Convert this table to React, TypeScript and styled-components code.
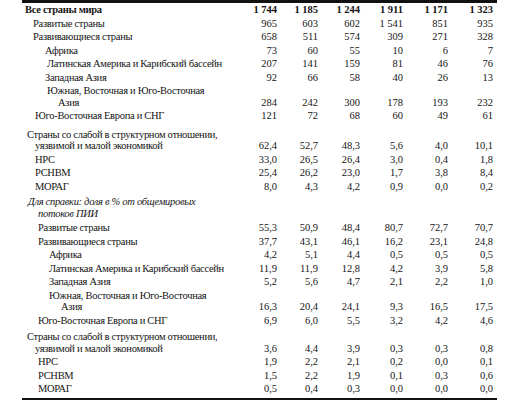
import React from 'react';
import styled, { createGlobalStyle, css } from 'styled-components';

const GlobalStyle = createGlobalStyle`
  html, body {
    margin: 0;
    padding: 0;
    background: #ffffff;
  }
  body {
    font-family: "Liberation Serif", "Times New Roman", serif;
    color: #151515;
  }
`;

const COLUMNS = '210px 45px 41px 42px 43px 45px 49px';

const Page = styled.div`
  width: 521px;
  height: 400px;
  overflow: hidden;
  padding-left: 22px;
  box-sizing: border-box;
`;

const Table = styled.div`
  width: 475px;
  border-top: 3px solid #111;
  border-bottom: 3px solid #111;
  padding-bottom: 2px;
  font-size: 10.5px;
`;

const Row = styled.div<{ gap?: number; bold?: boolean }>`
  display: grid;
  grid-template-columns: ${COLUMNS};
  align-items: end;
  padding-top: ${props => props.gap || 0}px;
  ${props => props.bold && css`
    font-weight: bold;
  `}
`;

const Label = styled.div<{ indent: number; italic?: boolean }>`
  line-height: 11.5px;
  padding: 1px 0;
  padding-left: ${props => props.indent - 22}px;
  letter-spacing: -0.3px;
  white-space: nowrap;
  ${props => props.italic && css`
    font-style: italic;
  `}
`;

const Line = styled.div<{ hang: number }>`
  padding-left: ${props => props.hang}px;
`;

const Value = styled.div`
  line-height: 13.5px;
  text-align: right;
  white-space: nowrap;
  &:last-child {
    padding-right: 4px;
  }
`;

type RowData = {
  label: string | string[];
  indent: number;
  hang?: number;
  gap?: number;
  bold?: boolean;
  italic?: boolean;
  values?: string[];
};

const weak = ['Страны со слабой в структурном отношении,', 'уязвимой и малой экономикой'];
const asia = ['Южная, Восточная и Юго-Восточная', 'Азия'];

const rows: RowData[] = [
  { label: 'Все страны мира', indent: 25, bold: true, values: ['1 744', '1 185', '1 244', '1 911', '1 171', '1 323'] },
  { label: 'Развитые страны', indent: 33, values: ['965', '603', '602', '1 541', '851', '935'] },
  { label: 'Развивающиеся страны', indent: 33, values: ['658', '511', '574', '309', '271', '328'] },
  { label: 'Африка', indent: 45, values: ['73', '60', '55', '10', '6', '7'] },
  { label: 'Латинская Америка и Карибский бассейн', indent: 47, values: ['207', '141', '159', '81', '46', '76'] },
  { label: 'Западная Азия', indent: 45, values: ['92', '66', '58', '40', '26', '13'] },
  { label: asia, indent: 47, hang: 11, values: ['284', '242', '300', '178', '193', '232'] },
  { label: 'Юго-Восточная Европа и СНГ', indent: 35, values: ['121', '72', '68', '60', '49', '61'] },
  { label: weak, indent: 27, hang: 8, gap: 5, values: ['62,4', '52,7', '48,3', '5,6', '4,0', '10,1'] },
  { label: 'НРС', indent: 35, values: ['33,0', '26,5', '26,4', '3,0', '0,4', '1,8'] },
  { label: 'РСНВМ', indent: 35, values: ['25,4', '26,2', '23,0', '1,7', '3,8', '8,4'] },
  { label: 'МОРАГ', indent: 35, values: ['8,0', '4,3', '4,2', '0,9', '0,0', '0,2'] },
  { label: ['Для справки: доля в % от общемировых', 'потоков ПИИ'], indent: 28, hang: 10, gap: 2, italic: true },
  { label: 'Развитые страны', indent: 38, gap: 1, values: ['55,3', '50,9', '48,4', '80,7', '72,7', '70,7'] },
  { label: 'Развивающиеся страны', indent: 38, values: ['37,7', '43,1', '46,1', '16,2', '23,1', '24,8'] },
  { label: 'Африка', indent: 49, values: ['4,2', '5,1', '4,4', '0,5', '0,5', '0,5'] },
  { label: 'Латинская Америка и Карибский бассейн', indent: 49, values: ['11,9', '11,9', '12,8', '4,2', '3,9', '5,8'] },
  { label: 'Западная Азия', indent: 49, values: ['5,2', '5,6', '4,7', '2,1', '2,2', '1,0'] },
  { label: asia, indent: 49, hang: 12, values: ['16,3', '20,4', '24,1', '9,3', '16,5', '17,5'] },
  { label: 'Юго-Восточная Европа и СНГ', indent: 38, values: ['6,9', '6,0', '5,5', '3,2', '4,2', '4,6'] },
  { label: weak, indent: 27, hang: 8, gap: 3, values: ['3,6', '4,4', '3,9', '0,3', '0,3', '0,8'] },
  { label: 'НРС', indent: 38, values: ['1,9', '2,2', '2,1', '0,2', '0,0', '0,1'] },
  { label: 'РСНВМ', indent: 38, values: ['1,5', '2,2', '1,9', '0,1', '0,3', '0,6'] },
  { label: 'МОРАГ', indent: 38, values: ['0,5', '0,4', '0,3', '0,0', '0,0', '0,0'] },
];

export default function App() {
  return (
    <>
      <GlobalStyle />
      <Page>
        <Table>
          {rows.map((row, i) => {
            const lines = Array.isArray(row.label) ? row.label : [row.label];
            return (
              <Row key={i} gap={row.gap} bold={row.bold}>
                <Label indent={row.indent} italic={row.italic}>
                  {lines.map((line, k) => (
                    <Line key={line} hang={k > 0 ? row.hang || 0 : 0}>{line}</Line>
                  ))}
                </Label>
                {(row.values || []).map((v, j) => (
                  <Value key={j}>{v}</Value>
                ))}
              </Row>
            );
          })}
        </Table>
      </Page>
    </>
  );
}
